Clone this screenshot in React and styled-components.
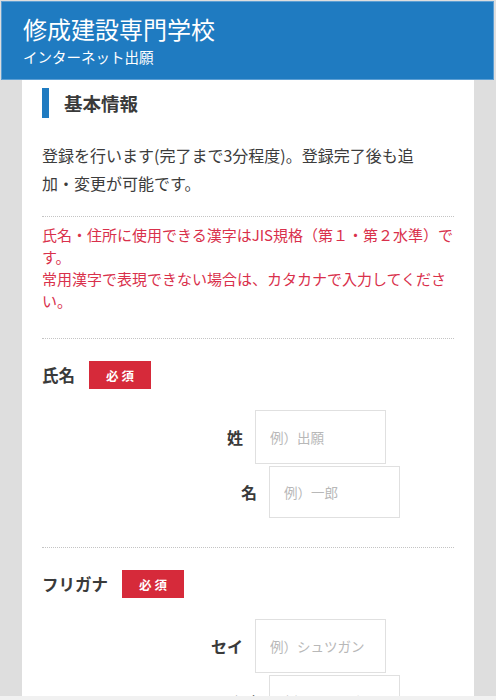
import React from 'react'
import styled, { createGlobalStyle } from 'styled-components'

const GlobalStyle = createGlobalStyle`
  * {
    box-sizing: border-box;
  }
  body {
    margin: 0;
    background-color: #dedede;
    font-family: "Noto Sans CJK JP", "Noto Sans", sans-serif;
    color: #333333;
  }
`

const Page = styled.div`
  padding: 1px 2px 0 1px;
`

const Header = styled.header`
  background-color: #1f7bc1;
  border: 1px solid #5d9fd4;
  padding: 11px 21px 12px;
  color: #ffffff;
  .title {
    font-size: 24px;
    line-height: 32px;
  }
  .sub {
    margin-top: 2px;
    font-size: 14.5px;
    line-height: 20px;
  }
`

const Card = styled.main`
  margin: 0 20px 0 21px;
  background-color: #ffffff;
  padding: 8px 20px 40px;
  min-height: 700px;
`

const SectionTitle = styled.h2`
  margin: 0;
  display: flex;
  align-items: center;
  height: 30px;
  font-size: 18.5px;
  font-weight: 700;
  color: #3a3a3a;
  &::before {
    content: "";
    display: block;
    width: 7px;
    height: 30px;
    margin-right: 15px;
    background-color: #1f7bc1;
  }
`

const Lead = styled.p`
  margin: 23px 0 19px;
  font-size: 16px;
  line-height: 28px;
  color: #3c3c3c;
  padding-right: 24px;
`

const Divider = styled.div`
  border-top: 1px dotted #c4c4c4;
`

const Notice = styled.p`
  margin: 7px 0 26px;
  font-size: 15px;
  line-height: 22px;
  color: #d9304b;
`

const Field = styled.section`
  padding: 22px 0 29px;
`

const FieldHead = styled.div`
  display: flex;
  align-items: center;
  gap: ${(p) => p.gap}px;
  height: 28px;
  font-size: 16.5px;
  font-weight: 700;
  color: #3a3a3a;
`

const Badge = styled.span`
  display: inline-flex;
  align-items: center;
  justify-content: center;
  width: 62px;
  height: 28px;
  background-color: #d62a3a;
  color: #ffffff;
  font-size: 12.5px;
  font-weight: 700;
  letter-spacing: 3px;
  padding-left: 3px;
`

const Inputs = styled.div`
  margin-top: 21px;
  display: flex;
  flex-direction: column;
  gap: 2px;
`

const InputRow = styled.label`
  display: flex;
  align-items: center;
  margin-left: ${(p) => p.indent}px;
`

const InputLabel = styled.span`
  width: 60px;
  margin-right: 12px;
  text-align: right;
  font-size: 16px;
  font-weight: 700;
  color: #3a3a3a;
`

const TextInput = styled.input`
  width: 131px;
  height: ${(p) => p.h}px;
  border: 1px solid #e0e0e0;
  padding: 0 14px;
  font-family: inherit;
  font-size: 13.5px;
  color: #333333;
  outline: none;
  &::placeholder {
    color: #b8b8b8;
  }
`

const BottomEdge = styled.div`
  position: fixed;
  left: 0;
  right: 0;
  bottom: 0;
  height: 4px;
  background-color: #f1f1f1;
`

const fields = [
  {
    label: '氏名',
    gap: 14,
    rows: [
      { label: '姓', placeholder: '例）出願' },
      { label: '名', placeholder: '例）一郎' },
    ],
  },
  {
    label: 'フリガナ',
    gap: 14,
    rows: [
      { label: 'セイ', placeholder: '例）シュツガン' },
      { label: 'メイ', placeholder: '例）イチロウ' },
    ],
  },
]

const App = () => {
  return (
    <Page>
      <GlobalStyle />
      <Header>
        <div className="title">修成建設専門学校</div>
        <div className="sub">インターネット出願</div>
      </Header>
      <Card>
        <SectionTitle>基本情報</SectionTitle>
        <Lead>登録を行います(完了まで3分程度)。登録完了後も追加・変更が可能です。</Lead>
        <Divider />
        <Notice>
          氏名・住所に使用できる漢字はJIS規格（第１・第２水準）です。
          <br />
          常用漢字で表現できない場合は、カタカナで入力してください。
        </Notice>
        {fields.map((f) => (
          <React.Fragment key={f.label}>
            <Divider />
            <Field>
              <FieldHead gap={f.gap}>
                {f.label}
                <Badge>必須</Badge>
              </FieldHead>
              <Inputs>
                {f.rows.map((r, i) => (
                  <InputRow key={r.label} indent={i === 0 ? 141 : 155}>
                    <InputLabel>{r.label}</InputLabel>
                    <TextInput placeholder={r.placeholder} h={i === 0 ? 54 : 52} />
                  </InputRow>
                ))}
              </Inputs>
            </Field>
          </React.Fragment>
        ))}
      </Card>
      <BottomEdge />
    </Page>
  )
}

export default App
